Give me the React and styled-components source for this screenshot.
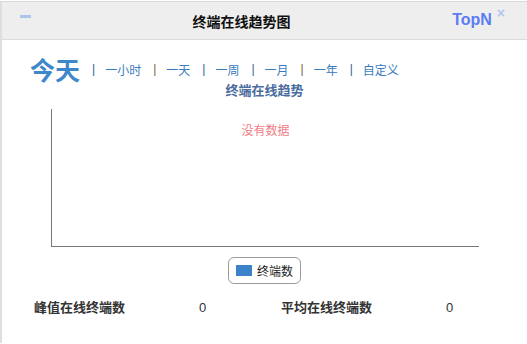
import React from 'react';
import styled, { createGlobalStyle } from 'styled-components';

const GlobalStyle = createGlobalStyle`
  html, body {
    margin: 0;
    padding: 0;
    background: #fff;
  }
  body {
    font-family: "Liberation Sans", "Noto Sans CJK SC", sans-serif;
  }
`;

const Window = styled.div`
  margin-top: 1px;
  border-top: 1px solid #d8d8d8;
  border-left: 2px solid #dedede;
  height: 342px;
  box-sizing: border-box;
  background: #fff;
`;

const Header = styled.div`
  height: 37px;
  background: #eeeeee;
  border-bottom: 1px solid #dcdcdc;
  display: flex;
  align-items: center;
  padding: 0 0 0 18px;
`;

const Minimize = styled.span`
  width: 11px;
  height: 3px;
  background: #abc5ec;
  margin-top: -8px;
`;

const Title = styled.div`
  flex: 1;
  text-align: center;
  font-size: 14px;
  font-weight: bold;
  color: #111;
`;

const TopN = styled.span`
  font-size: 16px;
  font-weight: bold;
  color: #5b7df3;
  margin-right: 5px;
  margin-top: -2px;
`;

const Close = styled.span`
  color: #b3c8ec;
  font-size: 14px;
  font-weight: bold;
  margin-right: 22px;
  margin-top: -16px;
`;

const Body = styled.div`
  padding-top: 14px;
`;

const RangeBar = styled.div`
  display: flex;
  align-items: center;
  height: 30px;
  padding-left: 28px;
`;

const Today = styled.span`
  font-size: 25px;
  font-weight: bold;
  color: #3f87cb;
  margin-right: 12px;
`;

const Sep = styled.span`
  font-size: 12px;
  color: ${p => (p.$warm ? '#7d5b3c' : '#35609a')};
  margin-right: 10px;
`;

const RangeLink = styled.a`
  font-size: 12px;
  color: #3a7cc0;
  text-decoration: none;
  margin-right: 12px;
`;

const ChartTitle = styled.div`
  text-align: center;
  font-size: 13px;
  font-weight: bold;
  color: #4a6c9e;
  line-height: 16px;
  margin-top: -1px;
`;

const Plot = styled.div`
  margin: 10px 0 0 49px;
  width: 427px;
  height: 137px;
  border-left: 1px solid #777;
  border-bottom: 1px solid #777;
  text-align: center;
`;

const Empty = styled.div`
  padding-top: 15px;
  font-size: 12px;
  line-height: 14px;
  color: #f27c86;
`;

const LegendRow = styled.div`
  display: flex;
  justify-content: center;
  margin-top: 10px;
`;

const Legend = styled.div`
  display: flex;
  align-items: center;
  gap: 5px;
  width: 73px;
  height: 27px;
  box-sizing: border-box;
  border: 1px solid #9a9a9a;
  border-radius: 6px;
  padding-left: 7px;
  font-size: 12px;
  color: #222;
`;

const Swatch = styled.span`
  width: 16px;
  height: 11px;
  background: #3c82c8;
`;

const Stats = styled.div`
  display: grid;
  grid-template-columns: 165px 82px 165px auto;
  padding-left: 32px;
  margin-top: 16px;
  line-height: 16px;
  font-size: 13px;
  color: #333;
`;

const StatLabel = styled.span`
  font-weight: bold;
`;

const StatValue = styled.span`
  font-size: 13px;
`;

const ranges = ['一小时', '一天', '一周', '一月', '一年', '自定义'];

export default function App() {
  return (
    <>
      <GlobalStyle />
      <Window>
        <Header>
          <Minimize />
          <Title>终端在线趋势图</Title>
          <TopN>TopN</TopN>
          <Close>×</Close>
        </Header>
        <Body>
          <RangeBar>
            <Today>今天</Today>
            {ranges.map((r, i) => (
              <React.Fragment key={r}>
                <Sep $warm={i === 1 || i === 4}>|</Sep>
                <RangeLink href="#">{r}</RangeLink>
              </React.Fragment>
            ))}
          </RangeBar>
          <ChartTitle>终端在线趋势</ChartTitle>
          <Plot>
            <Empty>没有数据</Empty>
          </Plot>
          <LegendRow>
            <Legend>
              <Swatch />
              终端数
            </Legend>
          </LegendRow>
          <Stats>
            <StatLabel>峰值在线终端数</StatLabel>
            <StatValue>0</StatValue>
            <StatLabel>平均在线终端数</StatLabel>
            <StatValue>0</StatValue>
          </Stats>
        </Body>
      </Window>
    </>
  );
}
